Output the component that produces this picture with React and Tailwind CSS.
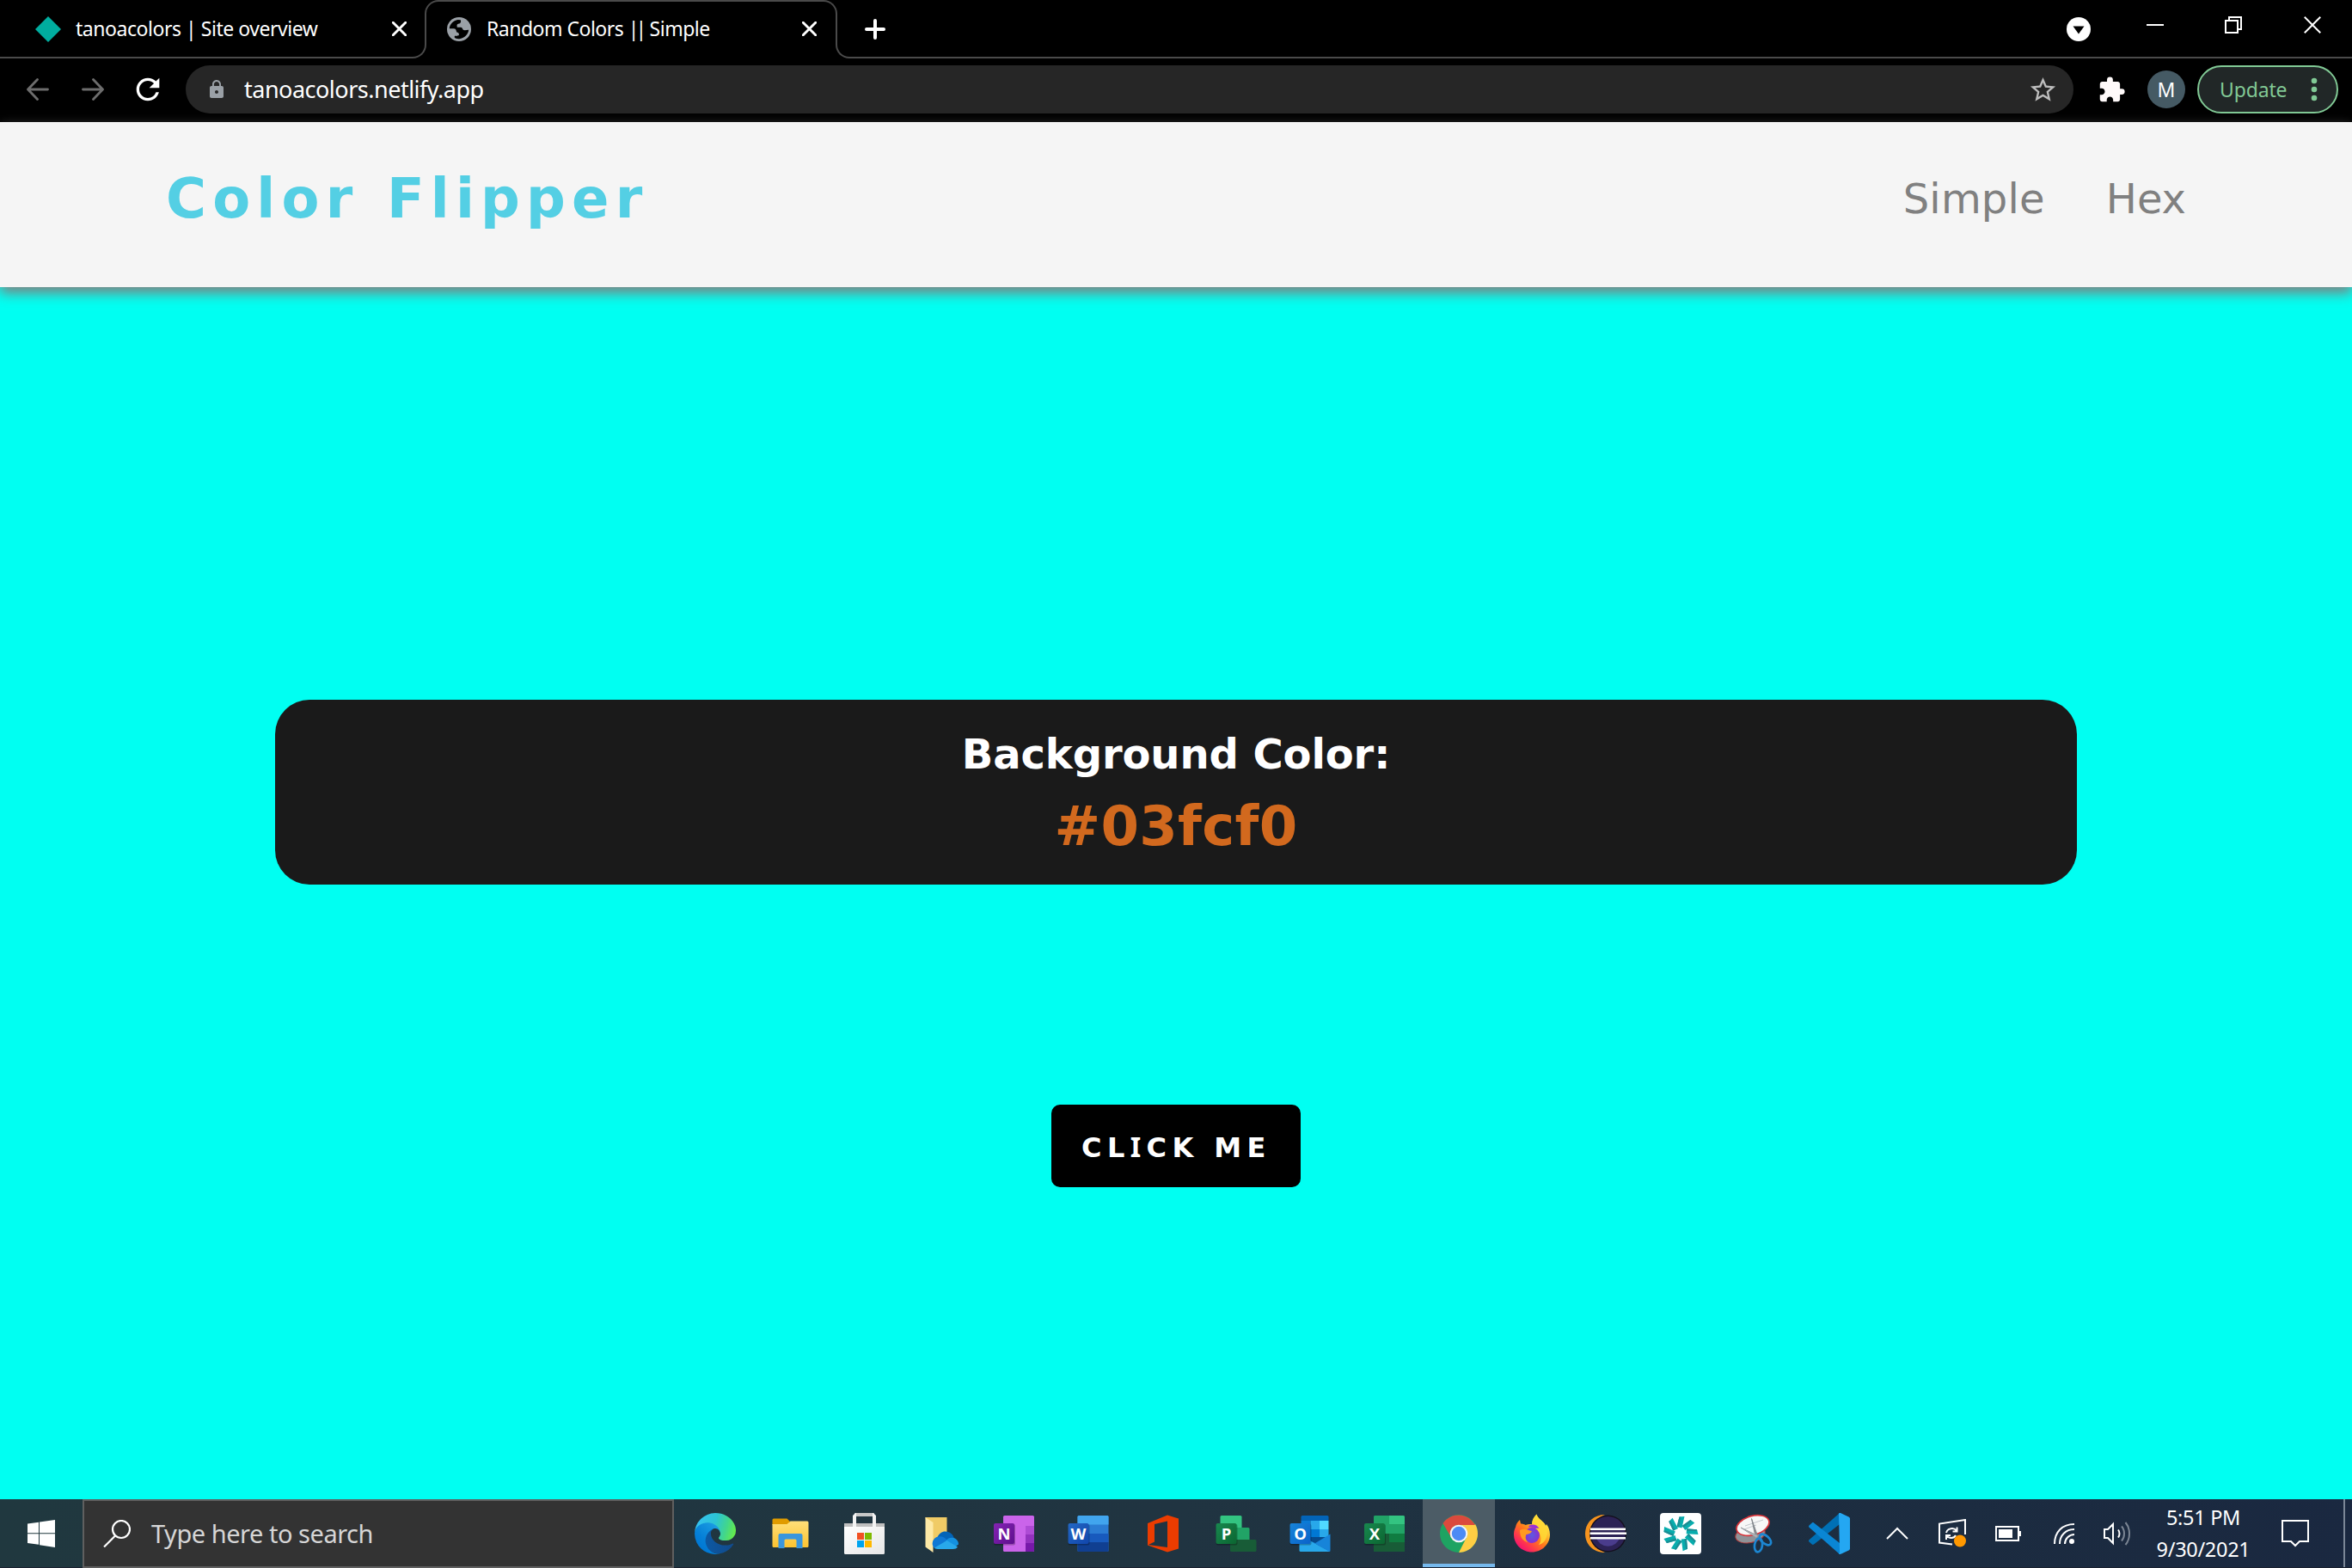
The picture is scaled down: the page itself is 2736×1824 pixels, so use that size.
import React from "react";
import { MdStarBorder, MdExtension, MdLock, MdRefresh } from "react-icons/md";

const UI = "font-['Noto_Sans','Open_Sans',sans-serif]";
const PAGE = "font-['DejaVu_Sans',sans-serif]";

function Cross({ className, size, width, cap }) {
  return (
    <svg className={className} width={size} height={size} viewBox="0 0 20 20" fill="none" stroke="#fff" strokeWidth={width} strokeLinecap={cap}>
      <path d="M1.5 1.5 18.5 18.5M18.5 1.5 1.5 18.5" />
    </svg>
  );
}

function Globe() {
  return (
    <svg className="size-7 shrink-0" viewBox="0 0 28 28">
      <circle cx="14" cy="14" r="14" fill="#9aa0a6" />
      <path d="M2.8 13.2C3.2 8 7.3 3.8 12.6 3l3.2.2c.6 1.4.4 3.2-.9 4.1-1.2.7-3 .2-3.3 1.7-.2 1 .3 1.8.1 2.8h4.5c2 .2 1.6 2.6 3.1 3.2 2 .5 4.2-.4 5.9-.2-.5 5.4-5.1 10-10.9 10.4-2.5.2-4.9-.4-5.5-1.4v-1.7c1.4-.5 4.6.2 5.1-1.5.5-1.6-1-3-2.7-3.2-.6-1.3-.4-3.3-2-3.900-1.900-.6-4.400-.2-6.400-.3Z" fill="#000" />
    </svg>
  );
}

function TabStrip() {
  return (
    <div className="relative h-[68px] shrink-0">
      {/* outline that runs under the inactive tabs and over the active one */}
      <div className="absolute inset-0 flex">
        <div className="flex w-[496px] items-end">
          <div className="h-[34px] w-full rounded-br-[16px] border-r-2 border-b-2 border-[#4a4a4a]" />
        </div>
        <div className="-ml-[2px] h-[34px] w-[480px] rounded-t-[16px] border-x-2 border-t-2 border-[#4a4a4a]" />
        <div className="-ml-[2px] flex flex-1 items-end">
          <div className="h-[34px] w-full rounded-bl-[16px] border-b-2 border-l-2 border-[#4a4a4a]" />
        </div>
      </div>
      <div className={`relative flex h-[67px] items-center text-[23px] leading-none text-white ${UI}`}>
        <div className="flex w-[496px] items-center pl-[41px]">
          <svg width="30" height="30" viewBox="0 0 31 31"><path d="M15.5 0 31 15.5 15.5 31 0 15.5Z" fill="#00ad9f" /></svg>
          <span className="ml-[17px] flex-1 tracking-[-0.46px] whitespace-nowrap">tanoacolors | Site overview</span>
          <Cross className="mr-[23px]" size="17" width="3.4" cap="round" />
        </div>
        <div className="flex w-[478px] items-center pl-6">
          <Globe />
          <span className="ml-[18px] flex-1 tracking-[-0.5px] whitespace-nowrap">Random Colors <span className="tracking-[-4px]">||</span><span className="ml-[2px]"> Simple</span></span>
          <Cross className="mr-[24px]" size="17" width="3.4" cap="round" />
        </div>
        <svg className="ml-8" width="24" height="24" viewBox="0 0 24 24" stroke="#fff" strokeWidth="4" strokeLinecap="round"><path d="M12 2v20M2 12h20" /></svg>
        <svg className="ml-auto" width="28" height="28" viewBox="0 0 28 28"><circle cx="14" cy="14" r="14" fill="#fff" /><path d="M7.5 10.5h13L14 19.5Z" fill="#000" /></svg>
        <div className="-mt-[9px] flex items-center">
          <svg className="ml-[65px]" width="20" height="2" viewBox="0 0 20 2"><path d="M0 0h20v2H0Z" fill="#fff" /></svg>
          <svg className="ml-[71px]" width="20" height="20" viewBox="0 0 20 20" fill="none" stroke="#fff" strokeWidth="2"><path d="M1 5h14v14H1ZM5 5V1h14v14h-4" /></svg>
          <Cross className="mr-9 ml-[72px]" size="20" width="2" cap="square" />
        </div>
      </div>
    </div>
  );
}

function Toolbar() {
  return (
    <div className={`flex h-[74px] shrink-0 items-center pb-[2px] ${UI}`}>
      <svg className="ml-[31px]" width="26" height="26" viewBox="0 0 26 26" fill="none" stroke="#6d6d6d" strokeWidth="2.8" strokeLinecap="round" strokeLinejoin="round"><path d="M24.5 13H2M12.5 1.5 1.5 13l11 11.5" /></svg>
      <svg className="ml-[38px]" width="26" height="26" viewBox="0 0 26 26" fill="none" stroke="#6d6d6d" strokeWidth="2.8" strokeLinecap="round" strokeLinejoin="round"><path d="M1.5 13H24M13.5 1.5l11 11.5-11 11.5" /></svg>
      <MdRefresh className="ml-[31px] size-10 text-white" />
      <div className="ml-[24px] flex h-14 w-[2196px] items-center rounded-full bg-[#262626]">
        <MdLock className="ml-6 size-6 text-[#9aa0a6]" />
        <span className="-mt-[2px] ml-5 flex-1 text-[27px] leading-none tracking-[-0.5px] text-white">tanoacolors.netlify.app</span>
        <MdStarBorder className="mr-[18px] size-[35px] text-[#bdbdbd]" />
      </div>
      <MdExtension className="ml-[28px] size-[33px] text-[#fffafa]" />
      <div className="ml-[25px] flex size-11 items-center justify-center rounded-full bg-[#455a64] text-[23px] leading-none text-white">M</div>
      <div className="ml-[14px] flex h-14 w-[164px] items-center rounded-full border-2 border-[#81c995] bg-[#212727] pl-[24px]">
        <span className="text-[23px] leading-none tracking-[-0.15px] text-[#81c995]">Update</span>
        <svg className="mr-[22px] ml-auto" width="8" height="28" viewBox="0 0 8 28" fill="#81c995"><circle cx="4" cy="4" r="3.3" /><circle cx="4" cy="14" r="3.3" /><circle cx="4" cy="24" r="3.3" /></svg>
      </div>
    </div>
  );
}

function Page() {
  return (
    <div className={`flex flex-1 flex-col bg-[#00fff2] ${PAGE}`}>
      <header className="flex h-48 shrink-0 items-center bg-[#f5f5f5] pr-[193px] pb-3.5 pl-[193px] shadow-[0_7px_14px_gray]">
        <span className="text-[64px] leading-none font-bold tracking-[7.2px] [word-spacing:3px] text-[#54cfe4]">Color Flipper</span>
        <nav className="ml-auto flex gap-[71px] text-[48px] leading-none text-[#808080]">
          <span className="tracking-[0.2px]">Simple</span>
          <span>Hex</span>
        </nav>
      </header>
      <main className="flex flex-1 flex-col items-center">
        <div className="mt-[480px] flex h-[215px] w-[2096px] flex-col items-center rounded-[40px] bg-[#1a1a1a] pt-[21px] font-bold">
          <span className="text-[48px] leading-[84px] tracking-[-0.1px] text-white">Background Color:</span>
          <span className="text-[64px] leading-[84px] tracking-[0.3px] text-[#d2691e]">#03fcf0</span>
        </div>
        <button className="mt-64 h-24 w-[290px] rounded-[10px] bg-black pt-[2px] pl-[35px] text-left text-[32px] leading-none font-bold tracking-[6.4px] whitespace-nowrap text-white">
          CL<span className="font-['Noto_Sans',sans-serif]">I</span>CK ME
        </button>
      </main>
    </div>
  );
}

function Slot({ children, active }) {
  return (
    <div className={active ? "flex h-full w-[84px] shrink-0 items-center justify-center border-b-4 border-[#76b9ed] bg-[#4c5c66] pt-1" : "flex h-full w-[86.4px] shrink-0 items-center justify-center"}>
      <svg className="overflow-visible" width="48" height="48" viewBox="0 0 48 48">{children}</svg>
    </div>
  );
}

function Tile({ x, letter, from, to, id }) {
  return (
    <>
      <defs><linearGradient id={id} x1="0" y1="0" x2="1" y2="1"><stop stopColor={from} /><stop offset="1" stopColor={to} /></linearGradient></defs>
      <rect x={x} y="13" width="25" height="24.5" rx="2" fill="#000" opacity="0.25" />
      <rect x={x} y="12" width="24" height="24" rx="2" fill={`url(#${id})`} />
      <text x={x + 12} y="30.5" textAnchor="middle" fontSize="18.5" fontWeight="700" fill="#fff" fontFamily="Open Sans, sans-serif">{letter}</text>
    </>
  );
}

const BLADES = [0, 40, 80, 120, 160, 200, 240, 280, 320];

function AppIcons() {
  return (
    <>
      <Slot>
        <defs>
          <linearGradient id="e1" x1="63" y1="177" x2="241" y2="177" gradientUnits="userSpaceOnUse"><stop stopColor="#0c59a4" /><stop offset="1" stopColor="#114a8b" /></linearGradient>
          <linearGradient id="e2" x1="157" y1="100" x2="46" y2="221" gradientUnits="userSpaceOnUse"><stop stopColor="#1b9de2" /><stop offset="0.16" stopColor="#1595df" /><stop offset="0.67" stopColor="#0680d7" /><stop offset="1" stopColor="#0078d4" /></linearGradient>
          <linearGradient id="e3" x1="10" y1="60" x2="250" y2="130" gradientUnits="userSpaceOnUse"><stop stopColor="#35c1f1" /><stop offset="0.45" stopColor="#2cc4d4" /><stop offset="0.75" stopColor="#42d68c" /><stop offset="1" stopColor="#66eb48" /></linearGradient>
        </defs>
        <g transform="scale(.1875)">
          <path fill="url(#e1)" d="M235.68 189.43a93.5 93.5 0 0 1-10.54 4.71 101.9 101.9 0 0 1-35.9 6.46c-47.32 0-88.54-32.55-88.54-74.32A31.48 31.48 0 0 1 117.13 98.6c-42.8 1.8-53.8 46.4-53.8 72.53 0 73.88 68.09 81.37 82.76 81.37 7.91 0 19.84-2.3 27-4.56l1.31-.44a128.34 128.34 0 0 0 66.6-52.8 4 4 0 0 0-5.32-5.27Z" />
          <path fill="url(#e2)" d="M105.73 241.42a79.2 79.2 0 0 1-22.74-21.34 80.72 80.72 0 0 1 29.53-120c3.12-1.47 8.45-4.05 15.54-4a32.35 32.35 0 0 1 25.69 13 31.88 31.88 0 0 1 6.36 18.66c0-.21 24.46-79.6-80-79.6-43.9 0-80 41.66-80 78.21a130.15 130.15 0 0 0 12.11 56 128 128 0 0 0 156.38 67.11 75.55 75.55 0 0 1-62.78-8Z" />
          <path fill="url(#e3)" d="M152.33 149.31c-.81 1.05-3.3 2.5-3.3 5.66 0 2.61 1.7 5.12 4.72 7.23 14.38 10 41.49 8.68 41.56 8.68a59.56 59.56 0 0 0 30.27-8.35 61.38 61.38 0 0 0 30.43-52.88c.26-22.41-8-37.31-11.34-43.91C223.46 23.84 177.72.5 128 .5A128 128 0 0 0 0 126.7c.48-36.54 36.8-66.05 80-66.05 3.5 0 23.46.34 42 10.07 16.34 8.58 24.9 18.94 30.85 29.21 6.18 10.67 7.28 24.15 7.28 29.52s-2.74 13.33-7.8 19.86Z" />
        </g>
      </Slot>
      <Slot>
        <defs><linearGradient id="fx" x1="0" y1="0" x2="0" y2="1"><stop stopColor="#ffdf79" /><stop offset="1" stopColor="#fcc331" /></linearGradient></defs>
        <path d="M3.5 8a1.5 1.5 0 0 1 1.5-1.5h15.5l3 3v4.5h-20Z" fill="#e09b00" />
        <path d="M3.5 13h17l4-3.500H44a1.500 1.500 0 0 1 1.500 1.500v27.500a1.500 1.500 0 0 1-1.500 1.500H5a1.500 1.500 0 0 1-1.500-1.500Z" fill="url(#fx)" />
        <path d="M10.5 41V26a2 2 0 0 1 2-2h24a2 2 0 0 1 2 2v15h-7v-9a1.500 1.500 0 0 0-1.500-1.500H19a1.500 1.500 0 0 0-1.500 1.500v9Z" fill="#3a96dd" />
      </Slot>
      <Slot>
        <defs><linearGradient id="st" x1="0" y1="0" x2="1" y2="1"><stop stopColor="#fff" /><stop offset="1" stopColor="#e6e6e6" /></linearGradient></defs>
        <path d="M1 12h47v5H1Z" fill="#bfbfbf" />
        <path d="M1 16h47v30.5a1.5 1.5 0 0 1-1.5 1.5h-44A1.5 1.5 0 0 1 1 46.5Z" fill="url(#st)" />
        <path d="M13.5 0h22v4h-22Z" fill="#c8c8c8" />
        <path d="M11 16V3l3-3h1v16ZM38 16V3l-3-3h-1v16Z" fill="#f3f3f3" />
        <path d="M16 23h8v8h-8Z" fill="#f25022" /><path d="M25 23h8v8h-8Z" fill="#7fba00" /><path d="M16 32h8v8h-8Z" fill="#00a4ef" /><path d="M25 32h8v8h-8Z" fill="#ffb900" />
      </Slot>
      <Slot>
        <path d="M9.5 5h25v34h-20Z" fill="#f0cb66" />
        <path d="M9.5 5 18.5 11v35L9.5 39.5Z" fill="#fde9a6" />
        <path d="M18 36c0-4 2-7 5.5-8 2-4 5-6.5 9-6.5 5.5 0 9.5 3.5 10.5 8.5l-15 9Z" fill="#0364b8" />
        <path d="M25 27.5c3-.5 6 .5 8 2.5l8 5-20 6.5c-4-2.5-4.5-7.5-1-11.5 1.5-1.7 3-2.3 5-2.5Z" fill="#0f78d4" />
        <path d="M33 33c1.5-3 4.5-4.5 8-4.3 4 .3 7 3.5 7 7.8l-4 3Z" fill="#1490df" />
        <path d="M20 40.5 34.5 32 47 39.5c-1 1.7-3 2.5-5.5 2.5h-16c-2.5 0-4.5-.5-5.5-1.5Z" fill="#28a8ea" />
      </Slot>
      <Slot>
        <rect x="13" y="3" width="36" height="42" rx="1.5" fill="#ca64ea" />
        <path d="M39 15h10v10H39Z" fill="#ae4bd5" /><path d="M39 25h10v10H39Z" fill="#9332bf" /><path d="M39 35h10v8.5a1.5 1.5 0 0 1-1.5 1.5H39Z" fill="#7719aa" />
        <Tile x={2} letter="N" from="#8324b3" to="#5f0f8e" id="on" />
      </Slot>
      <Slot>
        <rect x="13.5" y="3" width="36" height="42" rx="1.5" fill="#2b7cd3" />
        <path d="M13.5 13.5V4.5A1.5 1.5 0 0 1 15 3h33A1.5 1.5 0 0 1 49.5 4.5v9Z" fill="#41a5ee" />
        <path d="M13.5 24h36v10h-36Z" fill="#185abd" /><path d="M13.5 34h36v9.5a1.5 1.5 0 0 1-1.5 1.5H15a1.5 1.5 0 0 1-1.5-1.5Z" fill="#103f91" />
        <Tile x={2.5} letter="W" from="#2368c4" to="#1146ac" id="wd" />
      </Slot>
      <Slot>
        <path fillRule="evenodd" d="M8 12 31 2.500l13 4v35L31 45.500 8 37.500l1-.5 22 3V9.500L16 13v20.500L8 37.500Z" fill="#eb3c00" />
      </Slot>
      <Slot>
        <path d="M8 3h22a1.500 1.500 0 0 1 1.500 1.500V17H6.500V4.500A1.500 1.500 0 0 1 8 3Z" fill="#33c481" />
        <path d="M18 17h21a1.500 1.500 0 0 1 1.500 1.500V31H18Z" fill="#21a366" />
        <path d="M18 31h29a1.500 1.500 0 0 1 1.500 1.500v11A1.500 1.500 0 0 1 47 45H19.500a1.500 1.500 0 0 1-1.500-1.500Z" fill="#185c37" />
        <Tile x={1.5} letter="P" from="#18884f" to="#0b6631" id="pj" />
      </Slot>
      <Slot>
        <path d="M14.500 9V4.500A1.500 1.500 0 0 1 16 3h29A1.500 1.500 0 0 1 46.500 4.500V9Z" fill="#0364b8" />
        <path d="M14.500 9h11v10h-11Z" fill="#0a7ad6" /><path d="M25.500 9H36v10H25.500Z" fill="#28a8ea" /><path d="M36 9h10.500v10H36Z" fill="#50d9ff" />
        <path d="M14.500 19h11v10h-11Z" fill="#0358a7" /><path d="M25.500 19H36v10H25.500Z" fill="#0078d4" /><path d="M36 19h10.500v10H36Z" fill="#28a8ea" />
        <path d="M14.500 28h32L31 36Z" fill="#064a8c" />
        <path d="M12.500 25.500 31 35.500 48.500 45H14a1.500 1.500 0 0 1-1.500-1.500Z" fill="#28a8ea" />
        <path d="M48.500 24.500v19a1.500 1.500 0 0 1-1 1.500L27 33.500l4 1.500Z" fill="#1784d9" />
        <Tile x={1.5} letter="O" from="#1784d9" to="#0a63c9" id="ol" />
      </Slot>
      <Slot>
        <rect x="12" y="3" width="36" height="42" rx="1.5" fill="#107c41" />
        <path d="M12 13.5V4.5A1.5 1.5 0 0 1 13.5 3H30v21H12Z" fill="#21a366" />
        <path d="M30 3h16.5A1.5 1.5 0 0 1 48 4.5v9H30Z" fill="#33c481" /><path d="M30 13.5h18V24H30Z" fill="#21a366" />
        <path d="M12 24h18v10H12Z" fill="#185c37" /><path d="M12 34h36v9.5a1.5 1.5 0 0 1-1.5 1.5h-33a1.5 1.5 0 0 1-1.5-1.5Z" fill="#185c37" />
        <Tile x={1} letter="X" from="#18884f" to="#0b6631" id="xl" />
      </Slot>
      <div className="w-[2px] shrink-0" />
      <Slot active>
        <circle cx="24" cy="24" r="22" fill="#1ea362" />
        <path d="M43.05 13A22 22 0 0 1 24 46L32.66 29A10 10 0 0 0 24 14Z" fill="#ffce44" />
        <path d="M43.05 14A22 22 0 0 0 5.5 12L15.34 29A10 10 0 0 1 24 14Z" fill="#db4a3d" />
        <circle cx="24" cy="24" r="10.3" fill="#f5f5f5" /><circle cx="24" cy="24" r="8.2" fill="#4c8bf5" />
      </Slot>
      <Slot>
        <defs>
          <linearGradient id="ff" x1="0.85" y1="0.1" x2="0.2" y2="0.9"><stop stopColor="#fff44f" /><stop offset="0.3" stopColor="#ffbd2e" /><stop offset="0.55" stopColor="#ff7a1a" /><stop offset="0.8" stopColor="#ff3b4a" /><stop offset="1" stopColor="#f5156c" /></linearGradient>
          <radialGradient id="fp"><stop stopColor="#5b5be0" /><stop offset="1" stopColor="#8a2fd0" /></radialGradient>
        </defs>
        <path d="M29.5 1.5c1 4 5 6.5 8 9.5 1 1 2 2.5 2.5 4l1-2c2.5 3.5 4 7.5 4 12 0 11.5-9.5 20.5-21 20.5S3 36.5 3 25.5c0-3.5.5-6 2-9 .5-3 2-6 5-8.5l1 4.500c2 0 4 .5 5.500 1.500 2.500-1 5-1 7.500-1 0-4.500 2-8.500 5.500-11.500Z" fill="url(#ff)" />
        <path d="M29.5 1.5c1 4 5 6.5 8 9.5 4 4.5 5.5 11 3.5 17-1.5 5-5 8-9 9 3-4 3-9 1-13-2-3.5-7-5-8.5-9-1.2-4.5 1.5-10 5-13.5Z" fill="#ffd935" opacity="0.85" />
        <circle cx="24" cy="26" r="9" fill="url(#fp)" />
        <path d="M10 20c3-1.500 7-2 11.500.5l2.500.5c-1 3-4 3.500-6.500 4-1.500 3-1 6 2 9-6-1-9.500-6-9.500-14Z" fill="#ff9a1f" />
        <path d="M21 14.500c4-2 9-1 11.500 3.500-2-.5-4-.5-5.500.5-2-2-4-2-7-2Z" fill="#9b2fd6" />
      </Slot>
      <Slot>
        <path d="M23 2C9 2 0 12 0 24s9 22 23 22C13 42 7 34 7 24S13 6 23 2Z" fill="#f7941e" />
        <circle cx="26.5" cy="24" r="21.5" fill="#15101f" /><circle cx="26.5" cy="24" r="20" fill="#2c2255" />
        <path d="M12.5 28a14.5 14.5 0 0 0 28 0Z" fill="#4a3c8c" />
        <path d="M6 17.5h41v2.5H6ZM5.5 22.5h42.5v2.5H5.5ZM6 28h41v2.5H6Z" fill="#fff" />
      </Slot>
      <Slot>
        <rect width="48" height="48" rx="4" fill="#fff" />
        {BLADES.map((a) => (
          <g key={a} transform={`rotate(${a} 24 24)`}>
            <path d="M22.5 4.5 28.5 4 25.5 17.5 19.5 16Z" fill="#08acad" />
            <path d="M22.500 4.500 24.500 4.500 22 16.500 19.500 16Z" fill="#1c8c93" />
          </g>
        ))}
      </Slot>
      <Slot>
        <ellipse cx="19" cy="25" rx="17.5" ry="9.5" transform="rotate(-12 19 25)" fill="#8f9297" stroke="#a33" strokeWidth="1" />
        <ellipse cx="22" cy="14.5" rx="19.5" ry="11" transform="rotate(-16 22 14.5)" fill="#f7f7f7" stroke="#d8343a" strokeWidth="1.7" />
        <path d="M13 15 34 8M12 19 26 14" stroke="#c3c8cc" strokeWidth="1" />
        <path d="M20.5 6.5 28 28l-3-1Z" fill="#85898e" stroke="#85898e" />
        <path d="M8 17 28 26.5l-2 2Z" fill="#b2b6ba" stroke="#9a9ea3" />
        <ellipse cx="28.5" cy="37.5" rx="4.5" ry="8" transform="rotate(8 28.5 37.5)" fill="none" stroke="#1c86d1" strokeWidth="2.7" />
        <ellipse cx="36.5" cy="31" rx="4.5" ry="8" transform="rotate(-48 36.5 31)" fill="none" stroke="#1c86d1" strokeWidth="2.7" />
      </Slot>
      <Slot>
        <path d="M36 0v13L6 36.5c-.8.6-1.5.5-2.2 0L.5 33.5c-.7-.7-.6-1.5 0-2.200Z" fill="#0070b5" />
        <path d="M36 48V35L6 11.500c-.8-.6-1.500-.5-2.200 0L.5 14.500c-.7.7-.6 1.500 0 2.200Z" fill="#0a86d4" />
        <path d="M35 .5c1-.6 2-.5 3 0l8.500 4c1 .5 1.500 1.200 1.500 2.300v34.400c0 1.100-.5 1.800-1.500 2.300l-8.500 4c-1 .5-2 .6-3 0l1-2Z" fill="#24a7f2" />
      </Slot>
    </>
  );
}

function Tray() {
  return (
    <div className="ml-auto flex h-full items-center">
      <svg width="26" height="15" viewBox="0 0 26 15" fill="none" stroke="#fff" strokeWidth="2"><path d="M1 14 13 2l12 12" /></svg>
      <svg className="ml-[35px]" width="32" height="33" viewBox="0 0 32 33" fill="none" stroke="#fff" strokeWidth="2">
        <path d="M16 29.5 1 27.5V5.5L31 1v17" />
        <path d="M9 16c1-5 9-7 12-2M21.5 9.5v5h-5M20 19c-2 4-8 4-11 0M9 24v-5h5" />
        <circle cx="25" cy="25.5" r="7" fill="#ff9800" stroke="none" />
      </svg>
      <svg className="ml-[34px]" width="30" height="18" viewBox="0 0 30 18"><path d="M1 1h26v16H1Z" fill="none" stroke="#fff" strokeWidth="2" /><path d="M4 4h16v10H4ZM28 6h2v6h-2Z" fill="#fff" /></svg>
      <svg className="ml-[38px]" width="24" height="24" viewBox="0 0 24 24" fill="none" stroke="#fff" strokeWidth="2"><path d="M1 24C1 10 10 1 24 1M7 24C7 14 14 7 24 7M13 24c0-6 5-11 11-11" /><circle cx="21" cy="21" r="3" fill="#fff" stroke="none" /></svg>
      <svg className="ml-[34px]" width="32" height="28" viewBox="0 0 32 28" fill="none" stroke="#fff" strokeWidth="2"><path d="M1 9h4l6-6v22l-6-6H1ZM17 9.5c2 2.5 2 6.5 0 9" /><path d="M21 5.5c4 4.5 4 12.5 0 17M25.5 1c6 7 6 19 0 26" stroke="#7b8593" /></svg>
      <div className={`ml-[22px] flex w-[124px] flex-col items-center text-[23.500px] leading-[37px] whitespace-nowrap text-white ${UI}`}>
        <span className="tracking-[-0.3px]">5:51 PM</span>
        <span className="tracking-[-0.3px]">9/30/2021</span>
      </div>
      <svg className="ml-[29px]" width="32" height="32" viewBox="0 0 32 32" fill="none" stroke="#fff" strokeWidth="2"><path d="M1 1h30v24H21l-5 5-5-5H1Z" /></svg>
      <div className="ml-10 h-full w-[2px] bg-[#7c8797]" />
      <div className="w-2" />
    </div>
  );
}

function Taskbar() {
  return (
    <div className="flex h-20 shrink-0 items-center border-b border-[#1b2230] bg-linear-to-r from-[#20383f] via-[#203441] to-[#1a2840]">
      <div className="flex w-24 justify-center">
        <svg width="32" height="32" viewBox="0 0 32 32" fill="#fff"><path d="M0 4.5 13 2.7v12.5H0ZM14 2.5 32 0v15.2H14ZM0 16.2h13v12.6L0 27ZM14 16.2h18V32l-18-2.800Z" /></svg>
      </div>
      <div className={`flex h-20 w-[688px] items-center border-2 border-[#5f5f5f] bg-[#333333] pl-[22px] ${UI}`}>
        <svg width="32" height="32" viewBox="0 0 32 32" fill="none" stroke="#fff" strokeWidth="2.2"><circle cx="21" cy="11" r="10" /><path d="M14 18.5 1 31.5" /></svg>
        <span className="ml-6 text-[29px] leading-none tracking-[-0.47px] whitespace-nowrap text-[#d6d6d6]">Type here to search</span>
      </div>
      <div className="w-[5px] shrink-0" />
      <AppIcons />
      <Tray />
    </div>
  );
}

export default function App() {
  return (
    <div className="flex h-[1824px] w-[2736px] flex-col overflow-hidden bg-black">
      <TabStrip />
      <Toolbar />
      <Page />
      <Taskbar />
    </div>
  );
}
